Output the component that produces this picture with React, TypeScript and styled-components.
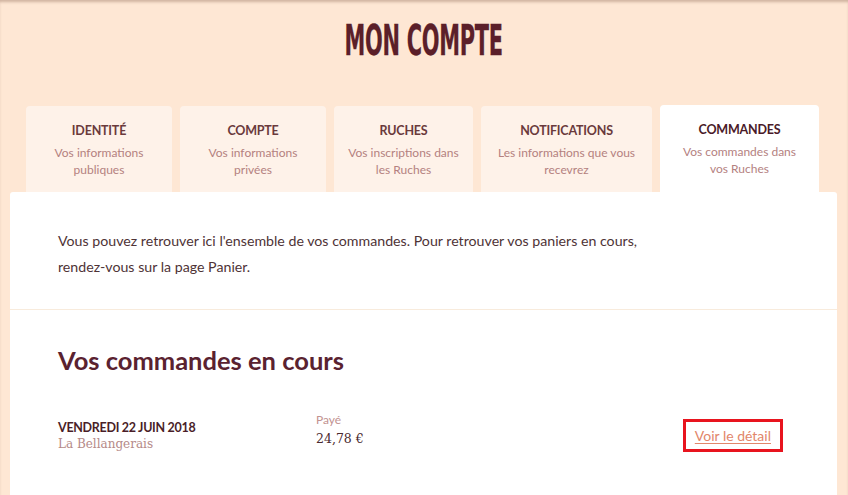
import styled, { createGlobalStyle } from 'styled-components';

const GlobalStyle = createGlobalStyle`
  html, body {
    margin: 0;
    padding: 0;
    background: #fee7d4;
  }
  body {
    font-family: Lato, 'Open Sans', sans-serif;
  }
`;

type Tab = {
  title: string;
  lines: string[];
  width: number;
  active?: boolean;
};

const tabs: Tab[] = [
  { title: 'IDENTITÉ', lines: ['Vos informations', 'publiques'], width: 146 },
  { title: 'COMPTE', lines: ['Vos informations', 'privées'], width: 146 },
  { title: 'RUCHES', lines: ['Vos inscriptions dans', 'les Ruches'], width: 139 },
  { title: 'NOTIFICATIONS', lines: ['Les informations que vous', 'recevrez'], width: 171 },
  { title: 'COMMANDES', lines: ['Vos commandes dans', 'vos Ruches'], width: 159, active: true },
];

const App = () => {
  return (
    <>
      <GlobalStyle />
      <Page>
        <Title>
          <TitleText>MON COMPTE</TitleText>
        </Title>
        <TabBar>
          {tabs.map((tab) => (
            <TabItem key={tab.title} $width={tab.width} $active={tab.active}>
              <TabTitle $active={tab.active}>{tab.title}</TabTitle>
              {tab.lines.map((line) => (
                <TabSub key={line}>{line}</TabSub>
              ))}
            </TabItem>
          ))}
        </TabBar>
        <Panel>
          <Intro>
            Vous pouvez retrouver ici l'ensemble de vos commandes. Pour retrouver vos paniers en cours,
            <br />
            rendez-vous sur la page Panier.
          </Intro>
          <Orders>
            <OrdersHeading>Vos commandes en cours</OrdersHeading>
            <OrderRow>
              <OrderInfo>
                <OrderDate>VENDREDI 22 JUIN 2018</OrderDate>
                <OrderPlace>La Bellangerais</OrderPlace>
              </OrderInfo>
              <OrderPrice>
                <PriceLabel>Payé</PriceLabel>
                <PriceValue>24,78 €</PriceValue>
              </OrderPrice>
              <DetailLink href="#">Voir le détail</DetailLink>
            </OrderRow>
          </Orders>
        </Panel>
      </Page>
    </>
  );
};

const Page = styled.div`
  min-height: 100vh;
  background: #fee7d4;
  box-shadow: inset 0 3px 3px -1px rgba(120, 80, 60, 0.35);
  overflow: hidden;
`;

const Title = styled.h1`
  margin: 0;
  padding-top: 16px;
  height: 89px;
  box-sizing: border-box;
  text-align: center;
`;

const TitleText = styled.span`
  display: inline-block;
  font-family: 'DejaVu Sans Condensed', 'DejaVu Sans', sans-serif;
  font-weight: 700;
  font-size: 43px;
  line-height: 48px;
  color: #5b1f29;
  transform: scaleX(0.54);
  letter-spacing: -0.5px;
  -webkit-text-stroke: 0.3px #5b1f29;
`;

const TabBar = styled.div`
  display: flex;
  gap: 8px;
  padding-left: 26px;
  margin-top: 16px;
  height: 87px;
  align-items: flex-end;
`;

const TabItem = styled.div<{ $width: number; $active?: boolean }>`
  width: ${(p) => p.$width}px;
  height: ${(p) => (p.$active ? 87 : 86)}px;
  box-sizing: border-box;
  padding-top: 15px;
  background: ${(p) => (p.$active ? '#ffffff' : '#fef2e9')};
  border-radius: 4px 4px 0 0;
  text-align: center;
  display: flex;
  flex-direction: column;
  align-items: center;
`;

const TabTitle = styled.div<{ $active?: boolean }>`
  font-family: Lato, sans-serif;
  font-weight: 700;
  font-size: 12.5px;
  line-height: 20px;
  letter-spacing: -0.2px;
  color: ${(p) => (p.$active ? '#4a1a28' : '#6a3a3c')};
  margin-bottom: 3px;
`;

const TabSub = styled.div`
  font-family: Lato, sans-serif;
  font-size: 12px;
  line-height: 17px;
  color: #b4817f;
`;

const Panel = styled.div`
  background: #ffffff;
  margin: 0 11px 0 10px;
  border-radius: 3px 3px 0 0;
  min-height: 320px;
`;

const Intro = styled.p`
  margin: 0;
  padding: 36px 48px 29px;
  font-family: Lato, sans-serif;
  font-size: 14.2px;
  line-height: 26px;
  color: #4e3336;
  border-bottom: 1px solid #f8ebdc;
`;

const Orders = styled.section`
  padding: 35px 48px 30px;
`;

const OrdersHeading = styled.h2`
  margin: 0 0 44px;
  font-family: Lato, sans-serif;
  font-weight: 700;
  font-size: 25.5px;
  line-height: 30px;
  color: #5a2230;
`;

const OrderRow = styled.div`
  display: grid;
  grid-template-columns: 258px 1fr auto;
  align-items: center;
  padding-right: 6px;
`;

const OrderInfo = styled.div`
  display: flex;
  flex-direction: column;
`;

const OrderDate = styled.div`
  font-family: Lato, sans-serif;
  font-weight: 700;
  font-size: 12.5px;
  line-height: 16px;
  color: #4a1e28;
  letter-spacing: -0.3px;
`;

const OrderPlace = styled.div`
  font-family: 'DejaVu Serif', 'Liberation Serif', serif;
  font-size: 12px;
  line-height: 16px;
  color: #b58a88;
`;

const OrderPrice = styled.div`
  display: flex;
  flex-direction: column;
  margin-top: -10px;
`;

const PriceLabel = styled.div`
  font-family: Lato, sans-serif;
  font-size: 12px;
  line-height: 16px;
  color: #c29290;
`;

const PriceValue = styled.div`
  font-family: 'DejaVu Serif', 'Liberation Serif', serif;
  font-size: 12.5px;
  line-height: 22px;
  color: #4a2a2e;
`;

const DetailLink = styled.a`
  display: inline-block;
  border: 3px solid #e8141e;
  padding: 3px 9px;
  font-family: Lato, sans-serif;
  font-size: 14px;
  line-height: 21px;
  color: #e2866a;
  text-decoration: underline;
  text-underline-offset: 2px;
`;

export default App;
